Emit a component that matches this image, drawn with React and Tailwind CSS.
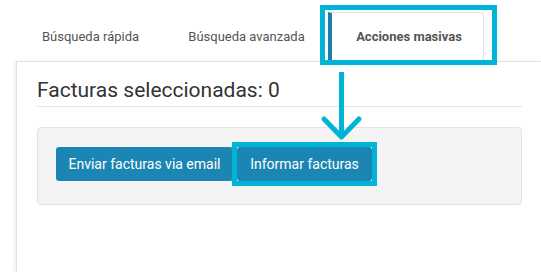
const App = () => {
  return (
    <div className="relative h-[272px] w-[541px] overflow-hidden bg-white font-['Roboto',sans-serif]">
      {/* Tabs */}
      <div className="flex h-[61px] items-end pl-[16px]">
        <div className="flex h-[49px] w-[149px] items-center justify-center text-[13px] text-[#555]">Búsqueda rápida</div>
        <div className="flex h-[49px] w-[163px] items-center justify-center text-[13px] text-[#555]">Búsqueda avanzada</div>
        <div className="relative">
          <div className="flex h-[49px] w-[156px] items-center justify-center rounded-tr-[3px] border-t border-r border-[#e4e4e4] border-l-4 border-l-[#1b7fab] bg-white pl-[3px] text-[13px] font-bold text-[#555]">
            Acciones masivas
          </div>
          {/* highlight box */}
          <div className="absolute -left-[8px] -right-[13px] -top-[7px] -bottom-[4px] border-[5px] border-[#00b4d8]" />
        </div>
      </div>

      {/* Panel */}
      <div className="ml-[16px] h-[211px] border-t border-l border-[#e2e2e2] px-[20px] pt-[15px] shadow-[-2px_0_3px_rgba(0,0,0,0.06)]">
        <h2 className="w-[485px] border-b border-[#e5e5e5] pb-[3px] text-[21px] leading-[26px] text-[#333]">Facturas seleccionadas: 0</h2>
        <div className="mt-[20px] flex h-[78px] w-[485px] items-start gap-[4px] rounded-[4px] border border-[#e3e3e3] bg-[#f4f4f4] pl-[18px] pt-[19px]">
          <button className="h-[34px] w-[177px] rounded-[3px] bg-[#1b86b3] text-[14px] text-white">Enviar facturas via email</button>
          <div className="relative">
            <button className="h-[34px] w-[135px] rounded-[3px] bg-[#1b86b3] text-[14px] text-white">Informar facturas</button>
            <div className="absolute -left-[5px] -right-[5px] -top-[5px] -bottom-[5px] border-[5px] border-[#00b4d8]" />
          </div>
        </div>
      </div>

      {/* arrow annotation */}
      <svg className="absolute left-[320px] top-[70px]" width="45" height="72" viewBox="0 0 45 72">
        <path d="M21.5 2 V66" stroke="#00b4d8" strokeWidth="5" fill="none" />
        <path d="M4 49 L21.5 67 L39 49" stroke="#00b4d8" strokeWidth="5" fill="none" strokeLinecap="round" strokeLinejoin="round" />
      </svg>
    </div>
  )
}

export default App
